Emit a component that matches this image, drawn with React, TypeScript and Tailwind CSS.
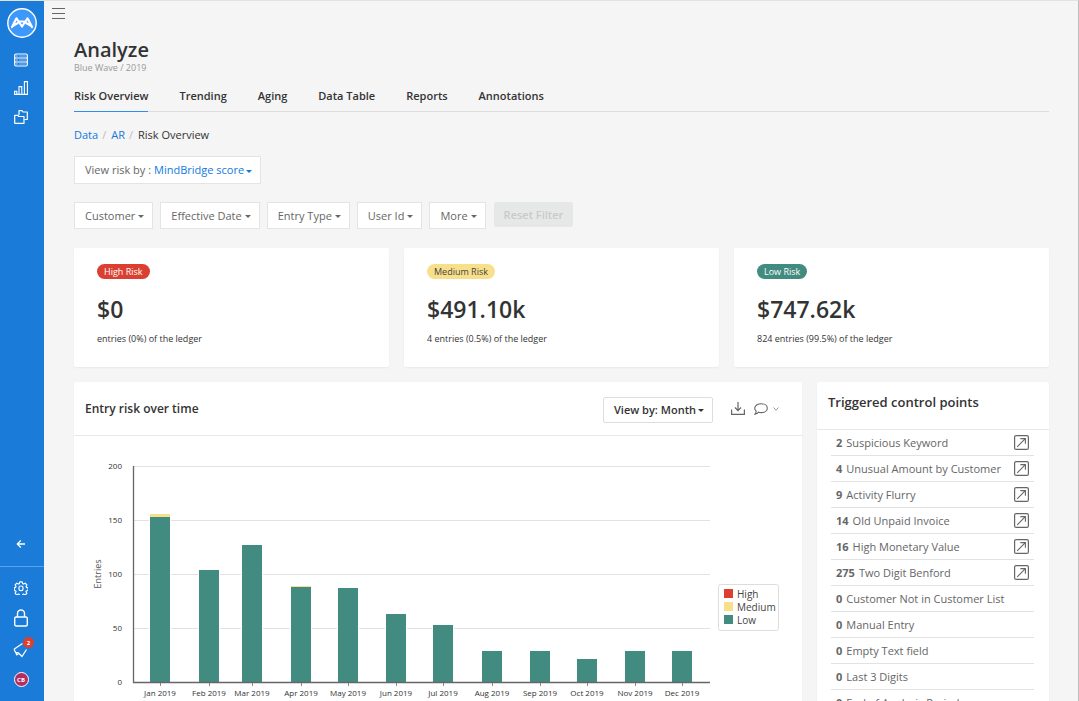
import React, { useState } from "react";

const tabs = ["Risk Overview", "Trending", "Aging", "Data Table", "Reports", "Annotations"];

const filters = ["Customer", "Effective Date", "Entry Type", "User Id", "More"];

const risks = [
  { label: "High Risk", badge: "bg-[#db3f31] text-white", amount: "$0", note: "entries (0%) of the ledger" },
  { label: "Medium Risk", badge: "bg-[#f8e08a] text-[#444]", amount: "$491.10k", note: "4 entries (0.5%) of the ledger" },
  { label: "Low Risk", badge: "bg-[#428b80] text-white", amount: "$747.62k", note: "824 entries (99.5%) of the ledger" }
];

const controlPoints = [
  { count: 2, name: "Suspicious Keyword" },
  { count: 4, name: "Unusual Amount by Customer" },
  { count: 9, name: "Activity Flurry" },
  { count: 14, name: "Old Unpaid Invoice" },
  { count: 16, name: "High Monetary Value" },
  { count: 275, name: "Two Digit Benford" },
  { count: 0, name: "Customer Not in Customer List" },
  { count: 0, name: "Manual Entry" },
  { count: 0, name: "Empty Text field" },
  { count: 0, name: "Last 3 Digits" },
  { count: 0, name: "End of Analysis Period" }
];

// x is the centre of the bar on the time axis
const months = [
  { name: "Jan 2019", x: 86, low: 153, medium: 3 },
  { name: "Feb 2019", x: 135, low: 104, medium: 0 },
  { name: "Mar 2019", x: 178, low: 127, medium: 0 },
  { name: "Apr 2019", x: 227, low: 88, medium: 1 },
  { name: "May 2019", x: 274, low: 87, medium: 0 },
  { name: "Jun 2019", x: 322, low: 63, medium: 0 },
  { name: "Jul 2019", x: 369, low: 53, medium: 0 },
  { name: "Aug 2019", x: 418, low: 29, medium: 0 },
  { name: "Sep 2019", x: 466, low: 29, medium: 0 },
  { name: "Oct 2019", x: 513, low: 21, medium: 0 },
  { name: "Nov 2019", x: 561, low: 29, medium: 0 },
  { name: "Dec 2019", x: 608, low: 29, medium: 0 }
];

const legend = [
  { name: "High", color: "#db3f31" },
  { name: "Medium", color: "#f8e08a" },
  { name: "Low", color: "#428b80" }
];

function Caret({ className = "" }: { className?: string }) {
  return (
    <svg className={`pointer-events-none mt-0.5 inline-block h-[3px] w-[6px] ${className}`} viewBox="0 0 6 3" fill="currentColor">
      <path d="M0 0h6L3 3z" />
    </svg>
  );
}

function Sidebar() {
  return (
    <nav className="flex w-11 shrink-0 flex-col items-center bg-[#1a7bd9] text-white">
      <a href="#home" aria-label="Home" className="mt-[7px]">
        <svg width="30" height="30" viewBox="0 0 30 30" fill="none" stroke="currentColor">
          <circle cx="15" cy="15" r="14.2" fill="#3d98fb" strokeWidth="1.4" />
          <path
            d="M5 19L9.500 10.300L15 18.500L20.500 10.300L25 19M12 13.500H18M6.500 17.500L10.500 15.200M23.500 17.500L19.500 15.200"
            strokeWidth="2.200"
            strokeLinecap="round"
            strokeLinejoin="round"
          />
        </svg>
      </a>
      <div className="flex w-full flex-col items-center pt-[15px] pr-0.5">
        <a href="#data" aria-label="Data">
          <svg width="14" height="14" viewBox="0 0 14 14" fill="none" stroke="currentColor" strokeWidth="1.2">
            <rect x="0.700" y="1" width="12.600" height="12" rx="1.200" />
            <path d="M0.700 5H13.300M0.700 9H13.300" strokeWidth="1.100" />
            <path d="M2.300 3H3.600M2.300 7H3.600M2.300 11H3.600" />
            <path d="M5 3H12M5 7H12M5 11H12" strokeWidth="0.500" />
          </svg>
        </a>
        <a href="#analyze" aria-label="Analyze" className="mt-[14px]">
          <svg width="14" height="14" viewBox="0 0 14 14" fill="none" stroke="currentColor" strokeWidth="1.1">
            <path d="M0.600 13.400V10.200H2.800V13.400M5 13.400V5.600H7.800V13.400M10.400 13.400V0.600H13.400V13.400M0 13.400H14" />
          </svg>
        </a>
        <a href="#files" aria-label="Files" className="mt-[15px]">
          <svg width="14" height="14" viewBox="0 0 14 14" fill="none" stroke="currentColor" strokeWidth="1.200" strokeLinejoin="round">
            <path d="M0.700 13.300V5.300H3.800L4.800 6.500H10V13.300z" />
            <path d="M5 5V0.700H8L9 2H13.300V9.500H10.500" />
          </svg>
        </a>
      </div>

      <button type="button" aria-label="Collapse" className="mt-auto mr-0.5 mb-[17px]">
        <svg width="10" height="10" viewBox="0 0 10 10" fill="none" stroke="currentColor" strokeWidth="1.300">
          <path d="M9 5H1.500M4.800 1.500L1.300 5L4.800 8.500" />
        </svg>
      </button>
      <div className="flex w-full flex-col items-center border-t border-[#5ca3e6] pt-[14px] pr-0.5 pb-[14px]">
        <button type="button" aria-label="Settings">
          <svg width="14" height="14" viewBox="0 0 24 24" fill="none" stroke="currentColor" strokeWidth="2">
            <path
              d="M9.900 1.500h4.200l.7 3 1.700.8 2.700-1.500 2.900 2.900-1.500 2.700.7 1.500 2.900.9v4.400l-3 .7-.7 1.600 1.600 2.600-2.900 2.900-2.700-1.600-1.600.7-.8 2.900H9.900l-.8-2.900-1.600-.7-2.700 1.600-2.900-2.900 1.600-2.600-.7-1.600-2.400-.7V11.800l2.400-.9.7-1.500L1.900 6.700l2.900-2.900 2.700 1.500 1.600-.8z"
              strokeLinejoin="round"
            />
            <rect x="8.500" y="8.500" width="7" height="8" rx="3" />
          </svg>
        </button>
        <button type="button" aria-label="Security" className="mt-[14px]">
          <svg width="14" height="18" viewBox="0 0 14 18" fill="none" stroke="currentColor" strokeWidth="1.400">
            <rect x="0.700" y="8" width="12.600" height="9" rx="1.500" />
            <path d="M3.500 8V4.500a3.500 3.500 0 0 1 7 0V8" />
          </svg>
        </button>
        <button type="button" aria-label="Announcements" className="relative mt-[15px]">
          <svg width="16" height="16" viewBox="0 0 16 16" fill="none" stroke="currentColor" strokeWidth="1.300" strokeLinejoin="round">
            <path d="M1 7.200L9.500 1.500M1 7.200L2.500 10.300L5.500 11L9 14.500L13.500 7.500M2.800 10.500L3.700 12.800L5.300 12.200" />
          </svg>
          <span className="absolute -top-[5px] left-[10px] flex h-[11px] w-[11px] items-center justify-center rounded-full bg-[#db3f31] text-[6px] font-bold">
            2
          </span>
        </button>
        <button
          type="button"
          aria-label="Account"
          className="mt-[14px] flex h-[15px] w-[15px] items-center justify-center rounded-full border border-white bg-[#b02e62] text-[6px] font-bold"
        >
          CB
        </button>
      </div>
    </nav>
  );
}

function RiskChart() {
  const base = 246;
  const scale = 1.08;

  return (
    <svg className="block w-full" viewBox="0 0 728 290" fontFamily="'Open Sans', sans-serif" role="img" aria-label="Entries by month">
      {[0, 50, 100, 150, 200].map((v) => (
        <g key={v}>
          {v > 0 && <path d={`M60 ${Math.round(base - v * scale) + 0.5}H636`} stroke="#e2e2e2" />}
          <text x="48" y={base - v * scale + 3} textAnchor="end" fontSize="8" fill="#333">
            {v}
          </text>
        </g>
      ))}
      <text transform="translate(27 138) rotate(-90)" textAnchor="middle" fontSize="9" fill="#555">
        Entries
      </text>
      {months.map((m) => (
        <g key={m.name}>
          <rect x={m.x - 11} y={base - m.low * scale} width="22" height={m.low * scale} fill="#fff" />
          <rect x={m.x - 10} y={Math.round(base - m.low * scale)} width="20" height={Math.round(m.low * scale)} fill="#428b80" />
          {m.medium > 0 && (
            <rect
              x={m.x - 10}
              y={Math.round(base - (m.low + m.medium) * scale)}
              width="20"
              height={m.medium > 1 ? 3 : 1}
              fill="#f8e08a"
            />
          )}
          <path d={`M${m.x + 0.5} 247V250`} stroke="#888" />
          <text x={m.x} y="260" textAnchor="middle" fontSize="8" fill="#333">
            {m.name}
          </text>
        </g>
      ))}
      <path d="M59.500 30V246.500H636" fill="none" stroke="#666" strokeWidth="1.300" />
      <rect x="644.500" y="148.500" width="60" height="46" rx="2" fill="#fff" stroke="#ddd" />
      {legend.map((l, i) => (
        <g key={l.name}>
          <rect x="650" y={153 + i * 13} width="9" height="9" fill={l.color} />
          <text x="663" y={162 + i * 13} fontSize="10" fontWeight="500" fill="#444">
            {l.name}
          </text>
        </g>
      ))}
    </svg>
  );
}

export default function App() {
  const [tab, setTab] = useState("Risk Overview");
  const [score, setScore] = useState("MindBridge score");
  const [period, setPeriod] = useState("Month");

  return (
    <div className="flex h-screen overflow-hidden border-t border-r border-t-[#e2e2e2] border-r-[#bbb] bg-[#f5f5f5] font-['Open_Sans',sans-serif] text-[11px] leading-4 text-[#333]">
      <Sidebar />
      <main className="min-w-0 flex-1 overflow-y-auto [scrollbar-width:none]">
        <button type="button" aria-label="Menu" className="mt-[7px] ml-2 block">
          <svg width="13" height="11" viewBox="0 0 13 11" stroke="#666">
            <path d="M0 0.500H13M0 5.500H13M0 10.500H13" />
          </svg>
        </button>

        <div className="pr-[29px] pl-[30px]">
          <header className="pt-[19px]">
            <h1 className="text-[20px] leading-6 font-semibold">Analyze</h1>
            <p className="text-[9px] leading-3 text-[#999]">Blue Wave / 2019</p>
          </header>

          <div role="tablist" className="mt-[10px] flex gap-[31px] border-b border-[#ddd]">
            {tabs.map((t) => (
              <button
                key={t}
                type="button"
                role="tab"
                aria-selected={t === tab}
                onClick={() => setTab(t)}
                className="-mb-px border-b border-transparent pt-1 pb-[7px] font-semibold aria-selected:border-[#2f8ded]"
              >
                {t}
              </button>
            ))}
          </div>

          <nav aria-label="Breadcrumb" className="mt-[15px] flex gap-1">
            <a href="#data" className="text-[#0f7ae0]">Data</a>
            <span className="mr-px text-[#bbb]">/</span>
            <a href="#ar" className="text-[#0f7ae0]">AR</a>
            <span className="mr-px text-[#bbb]">/</span>
            <span>Risk Overview</span>
          </nav>

          <div className="mt-[13px] inline-flex h-7 items-center border border-[#e4e4e4] bg-white pr-2 pl-[10px] text-[#666]">
            <label htmlFor="score" className="mr-[3px]">View risk by :</label>
            <select
              id="score"
              value={score}
              onChange={(e) => setScore(e.target.value)}
              className="appearance-none [field-sizing:content] text-[#0f7ae0]"
            >
              <option>MindBridge score</option>
              <option>Control point</option>
            </select>
            <Caret className="ml-0.5 text-[#0f7ae0]" />
          </div>

          <div className="mt-[18px] flex gap-[7px]">
            {filters.map((f) => (
              <button
                key={f}
                type="button"
                aria-haspopup="menu"
                className="flex h-[27px] items-center gap-[3px] border border-[#e4e4e4] bg-white pr-2 pl-[10px] text-[#666]"
              >
                {f}
                <Caret />
              </button>
            ))}
            <button type="button" disabled className="ml-px h-[25px] rounded-xs bg-[#e6e8e7] px-[10px] font-semibold text-[#c8cac9]">
              Reset Filter
            </button>
          </div>

          <div className="mt-[19px] grid grid-cols-3 gap-[15px]">
            {risks.map((r) => (
              <section key={r.label} className="h-[119px] rounded-xs bg-white px-[23px] pt-4 shadow-xs">
                <span className={`block w-fit rounded-full px-[7px] text-[9px] leading-[15px] font-medium ${r.badge}`}>{r.label}</span>
                <div className="mt-[14px] text-[23px] leading-8 font-semibold">{r.amount}</div>
                <p className="mt-2 text-[9px] leading-3">{r.note}</p>
              </section>
            ))}
          </div>

          <div className="mt-[15px] flex gap-[15px]">
            <section className="min-w-0 flex-1 rounded-xs bg-white shadow-xs">
              <div className="flex h-[54px] items-center border-b border-[#e8e8e8] pr-[23px] pl-[11px]">
                <h2 className="mr-auto text-[12px] font-semibold">Entry risk over time</h2>
                <div className="mt-0.5 flex h-[26px] items-center rounded-xs border border-[#ddd] pr-2 pl-[10px] font-semibold">
                  <label htmlFor="period" className="mr-[3px]">View by:</label>
                  <select
                    id="period"
                    value={period}
                    onChange={(e) => setPeriod(e.target.value)}
                    className="appearance-none [field-sizing:content]"
                  >
                    <option>Month</option>
                    <option>Week</option>
                  </select>
                  <Caret className="ml-0.5" />
                </div>
                <button type="button" aria-label="Download" className="ml-[18px]">
                  <svg width="14" height="13" viewBox="0 0 14 13" fill="none" stroke="#666" strokeWidth="1.200">
                    <path d="M0.600 7.500V12.400H13.400V7.500M7 0V8.500M4 5.500L7 8.700L10 5.500" />
                  </svg>
                </button>
                <button type="button" aria-label="Comments" className="ml-[9px] flex items-center gap-[5px]">
                  <svg width="14" height="12" viewBox="0 0 14 12" fill="none" stroke="#666" strokeWidth="1.100">
                    <path d="M7.300 0.800C10.800 0.800 13.300 2.700 13.300 5.200S10.800 9.600 7.300 9.600C6.300 9.600 5.400 9.500 4.600 9.200C3.800 10.200 2.500 11 1 11.100C1.800 10.300 2.200 9.400 2.200 8.100C1.200 7.300 0.700 6.300 0.700 5.200C0.700 2.700 3.800 0.800 7.300 0.800z" />
                  </svg>
                  <svg width="6" height="4" viewBox="0 0 6 4" fill="none" stroke="#999">
                    <path d="M0.500 0.500L3 3.200L5.500 0.500" />
                  </svg>
                </button>
              </div>
              <RiskChart />
            </section>

            <section className="w-[232px] shrink-0 rounded-xs bg-white shadow-xs">
              <h2 className="h-12 border-b border-[#e8e8e8] pt-3 pl-[11px] text-[13px] font-semibold">Triggered control points</h2>
              <ul className="mr-[15px] ml-[14px] text-[#666]">
                {controlPoints.map((c) => (
                  <li key={c.name} className="flex h-[26px] items-center gap-1 border-b border-[#e2e2e2] px-[5px]">
                    <b>{c.count}</b>
                    <span>{c.name}</span>
                    {c.count > 0 && (
                      <button type="button" aria-label={`Open ${c.name}`} className="ml-auto">
                        <svg width="15" height="15" viewBox="0 0 15 15" fill="none" stroke="#666">
                          <rect x="0.600" y="0.600" width="13.800" height="13.800" rx="1.500" strokeWidth="1.200" />
                          <path d="M3.200 11.800L11.300 3.700M6.300 3.600H11.400V8.700" strokeWidth="1.100" />
                        </svg>
                      </button>
                    )}
                  </li>
                ))}
              </ul>
            </section>
          </div>
        </div>
      </main>
    </div>
  );
}
